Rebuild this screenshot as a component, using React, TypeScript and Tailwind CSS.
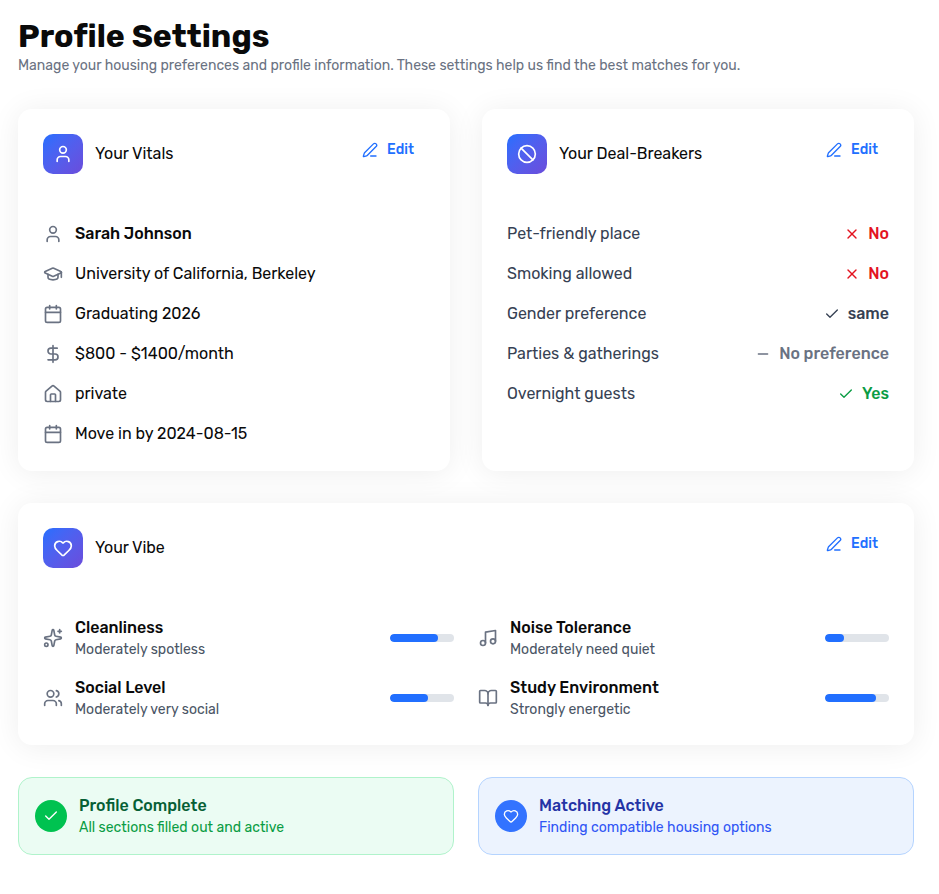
import type { ReactNode } from "react";
import {
  Ban,
  BookOpen,
  Calendar,
  Check,
  DollarSign,
  GraduationCap,
  Heart,
  House,
  Minus,
  Music,
  PenLine,
  Sparkles,
  User,
  Users,
  X,
  type LucideIcon,
} from "lucide-react";

const vitals: { icon: LucideIcon; text: string; strong?: boolean }[] = [
  { icon: User, text: "Sarah Johnson", strong: true },
  { icon: GraduationCap, text: "University of California, Berkeley" },
  { icon: Calendar, text: "Graduating 2026" },
  { icon: DollarSign, text: "$800 - $1400/month" },
  { icon: House, text: "private" },
  { icon: Calendar, text: "Move in by 2024-08-15" },
];

const dealBreakers: {
  label: string;
  value: string;
  icon: LucideIcon;
  color: string;
}[] = [
  { label: "Pet-friendly place", value: "No", icon: X, color: "text-[#e3131f]" },
  { label: "Smoking allowed", value: "No", icon: X, color: "text-[#e3131f]" },
  { label: "Gender preference", value: "same", icon: Check, color: "text-gray-700" },
  { label: "Parties & gatherings", value: "No preference", icon: Minus, color: "text-gray-500" },
  { label: "Overnight guests", value: "Yes", icon: Check, color: "text-[#0a9c44]" },
];

const vibes: { icon: LucideIcon; label: string; detail: string; level: number }[] = [
  { icon: Sparkles, label: "Cleanliness", detail: "Moderately spotless", level: 75 },
  { icon: Music, label: "Noise Tolerance", detail: "Moderately need quiet", level: 30 },
  { icon: Users, label: "Social Level", detail: "Moderately very social", level: 60 },
  { icon: BookOpen, label: "Study Environment", detail: "Strongly energetic", level: 80 },
];

type SectionCardProps = {
  icon: LucideIcon;
  title: string;
  children: ReactNode;
};

function SectionCard({ icon: Icon, title, children }: SectionCardProps) {
  return (
    <section className="rounded-[14px] bg-white p-[25px] shadow-[0_2px_30px_rgba(0,0,0,0.07)]">
      <div className="mb-12 flex items-start justify-between">
        <div className="flex items-center gap-3">
          <div className="flex size-10 items-center justify-center rounded-[10px] bg-linear-to-br from-[#216fff] to-[#6a4cdb] text-white">
            <Icon size={20} />
          </div>
          <h2 className="text-base">{title}</h2>
        </div>
        <button
          type="button"
          className="flex h-8 items-center gap-[9px] rounded-lg px-[11px] text-sm font-medium text-[#216fff] hover:bg-blue-50"
        >
          <PenLine size={16} />
          Edit
        </button>
      </div>
      {children}
    </section>
  );
}

export default function App() {
  return (
    <main className="bg-white pt-4 pr-[25px] pb-10 pl-[18px] font-['Rubik','Roboto',sans-serif] text-base text-[#0a0a0a]">
      <header className="mb-[33px]">
        <h1 className="text-[32px] leading-10 font-bold [font-variant-ligatures:none]">
          Profile Settings
        </h1>
        <p className="text-sm text-gray-500">
          Manage your housing preferences and profile information. These settings
          help us find the best matches for you.
        </p>
      </header>

      <div className="grid grid-cols-2 gap-8">
        <SectionCard icon={User} title="Your Vitals">
          <ul className="space-y-4">
            {vitals.map(({ icon: Icon, text, strong }) => (
              <li key={text} className="flex items-center gap-3">
                <Icon size={20} className="text-gray-500" />
                <span className={strong ? "font-medium" : ""}>{text}</span>
              </li>
            ))}
          </ul>
        </SectionCard>

        <SectionCard icon={Ban} title="Your Deal-Breakers">
          <dl className="space-y-4">
            {dealBreakers.map(({ label, value, icon: Icon, color }) => (
              <div key={label} className="flex items-center justify-between">
                <dt className="text-gray-700">{label}</dt>
                <dd className={`flex items-center gap-2 font-medium ${color}`}>
                  <Icon size={16} />
                  {value}
                </dd>
              </div>
            ))}
          </dl>
        </SectionCard>

        <div className="col-span-2">
          <SectionCard icon={Heart} title="Your Vibe">
            <div className="grid grid-cols-2 gap-x-6 gap-y-4">
              {vibes.map(({ icon: Icon, label, detail, level }) => (
                <div key={label} className="flex items-center gap-3">
                  <Icon size={20} className="text-gray-500" />
                  <div className="flex-1">
                    <h3 className="font-medium">{label}</h3>
                    <p className="text-sm text-gray-600">{detail}</p>
                  </div>
                  <div className="h-2 w-16 overflow-hidden rounded-full bg-[#e0e4e9]">
                    <div
                      className="h-full rounded-full bg-[#216fff]"
                      style={{ width: `${level}%` }}
                    />
                  </div>
                </div>
              ))}
            </div>
          </SectionCard>
        </div>
      </div>

      <div className="mt-8 grid grid-cols-2 gap-6">
        <div className="flex items-center gap-3 rounded-[14px] border border-[#b0f3cb] bg-[#ebfcf3] p-4">
          <div className="flex size-8 items-center justify-center rounded-full bg-[#00c250] text-white">
            <Check size={16} />
          </div>
          <div>
            <h3 className="font-medium text-[#065f35]">Profile Complete</h3>
            <p className="text-sm text-[#0a9c44]">All sections filled out and active</p>
          </div>
        </div>
        <div className="flex items-center gap-3 rounded-[14px] border border-[#b5d4ff] bg-[#ecf3fe] p-4">
          <div className="flex size-8 items-center justify-center rounded-full bg-[#3373ff] text-white">
            <Heart size={16} />
          </div>
          <div>
            <h3 className="font-medium text-[#2433a5]">Matching Active</h3>
            <p className="text-sm text-[#2f55f5]">Finding compatible housing options</p>
          </div>
        </div>
      </div>
    </main>
  );
}
